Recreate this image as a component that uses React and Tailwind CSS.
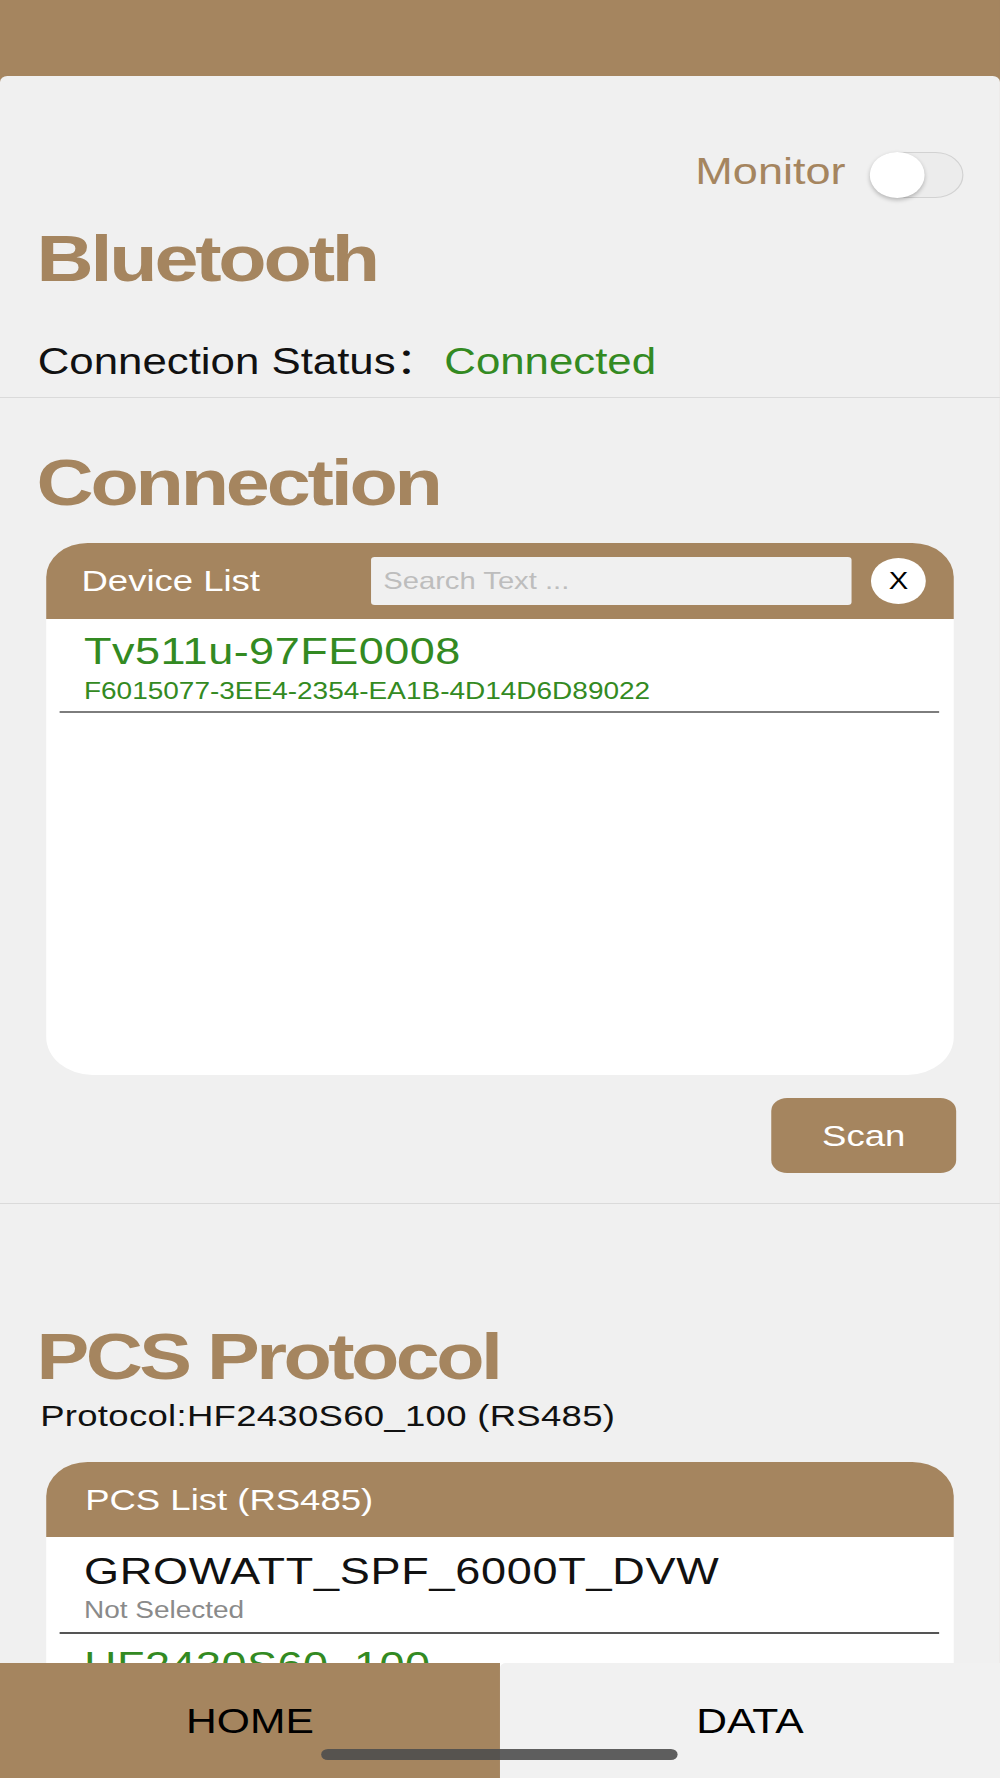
import React from "react";

function Toggle() {
  return (
    <div className="relative ml-[20px] h-[46px] w-[77px] shrink-0 rounded-full border border-[#d2d2d2] bg-[#ececec]">
      <div className="absolute left-[-1px] top-[-1px] h-[46px] w-[45px] rounded-full bg-white shadow-[0_2px_4px_rgba(0,0,0,0.25)]" />
    </div>
  );
}

export default function App() {
  return (
    <div className="relative h-[1778px] w-[1000px] overflow-hidden bg-[#a5855f] font-['Liberation_Sans','Noto_Sans_CJK_SC',sans-serif]">
      <div className="h-[1778px] w-[822px] origin-top-left scale-x-[1.2165]">
        <div className="h-[76px] bg-[#a5855f]" />
        <div className="flex min-h-[1702px] flex-col rounded-t-[6px] bg-[#f0f0f0] pt-[76px] [&>*]:shrink-0">
          {/* Monitor row */}
          <div className="flex h-[46px] items-start justify-end pr-[30px]">
            <span className="mt-[1px] text-[37px] leading-none text-[#a5855f]">Monitor</span>
            <Toggle />
          </div>

          {/* Bluetooth */}
          <h1 className="mt-[28px] pl-[30px] text-[65px] font-bold leading-none tracking-[-2.6px] text-[#a5855f]">
            Bluetooth
          </h1>
          <div className="mt-[53px] flex h-[36px] pl-[31px] text-[36px] leading-none">
            <span className="text-[#111]">Connection Status：</span>
            <span className="ml-[4px] text-[#338a22]">Connected</span>
          </div>
          <div className="mt-[17px] h-px bg-[#dadada]" />

          {/* Connection */}
          <h1 className="mt-[52px] pl-[30px] text-[65px] font-bold leading-none tracking-[-2.6px] text-[#a5855f]">
            Connection
          </h1>
          <div className="mx-[38px] mt-[28px] flex flex-col">
            <div className="flex h-[76px] items-center rounded-t-[34px] bg-[#a5855f] pl-[29px] pr-[23px]">
              <span className="text-[30px] leading-none text-white">Device List</span>
              <div className="ml-auto flex h-[48px] w-[395px] items-center rounded-[3px] bg-[#f0f0f0] pl-[10px] text-[24px] leading-none text-[#bdbdbd]">
                Search Text ...
              </div>
              <div className="ml-[16px] flex h-[46px] w-[45px] items-center justify-center rounded-full bg-white text-[24px] leading-none text-black">
                X
              </div>
            </div>
            <div className="flex h-[456px] flex-col rounded-b-[38px] bg-white pt-[14px]">
              <div className="pl-[31px] text-[37px] leading-none tracking-[0.4px] text-[#338a22]">Tv511u-97FE0008</div>
              <div className="mt-[10px] pl-[31px] text-[23px] leading-none text-[#338a22]">
                F6015077-3EE4-2354-EA1B-4D14D6D89022
              </div>
              <div className="ml-[11px] mr-[12px] mt-[8px] h-[1.5px] bg-[#7d7d7d]" />
            </div>
          </div>
          <div className="mr-[36px] mt-[23px] flex h-[75px] w-[152px] items-center justify-center self-end rounded-[13px] bg-[#a5855f] text-[30px] leading-none text-white">
            Scan
          </div>
          <div className="mt-[30px] h-px bg-[#dadada]" />

          {/* PCS Protocol */}
          <h1 className="mt-[120px] pl-[30px] text-[65px] font-bold leading-none tracking-[-2.9px] text-[#a5855f]">
            PCS Protocol
          </h1>
          <div className="mt-[12px] pl-[33px] text-[30px] leading-none tracking-[0.25px] text-[#111]">
            Protocol:HF2430S60_100 (RS485)
          </div>
          <div className="mx-[38px] mt-[31px] flex flex-col">
            <div className="flex h-[75px] items-center rounded-t-[34px] bg-[#a5855f] pl-[32px]">
              <span className="text-[30px] leading-none text-white">PCS List (RS485)</span>
            </div>
            <div className="flex h-[300px] flex-col bg-white pt-[16px]">
              <div className="pl-[31px] text-[37px] leading-none tracking-[0.6px] text-[#111]">GROWATT_SPF_6000T_DVW</div>
              <div className="mt-[9px] pl-[31px] text-[23px] leading-none text-[#8a8a8a]">Not Selected</div>
              <div className="ml-[11px] mr-[12px] mt-[10px] h-[1.5px] bg-[#555]" />
              <div className="mt-[13px] pl-[31px] text-[37px] leading-none tracking-[0.4px] text-[#338a22]">HF2430S60_100</div>
              <div className="mt-[9px] pl-[31px] text-[23px] leading-none text-[#338a22]">Selected</div>
            </div>
          </div>
        </div>

        {/* Bottom tab bar */}
        <div className="absolute bottom-0 left-0 flex h-[115px] w-[822px]">
          <div className="flex h-full w-1/2 items-center justify-center bg-[#a5855f] text-[35px] leading-none text-black">
            HOME
          </div>
          <div className="flex h-full w-1/2 items-center justify-center rounded-tl-[5px] bg-[#f1f1f1] text-[35px] leading-none text-black">
            DATA
          </div>
          <div className="absolute bottom-[18px] left-[264px] h-[11px] w-[293px] rounded-full bg-[#4e4e4e]/90" />
        </div>
      </div>
    </div>
  );
}
